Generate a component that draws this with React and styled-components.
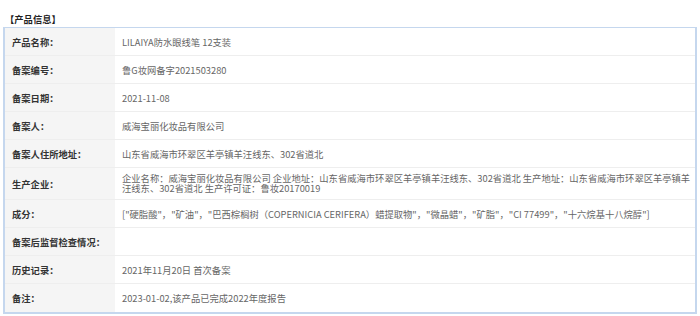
import React from "react";
import styled, { createGlobalStyle } from "styled-components";

const GlobalStyle = createGlobalStyle`
  *, *::before, *::after {
    box-sizing: border-box;
  }

  body {
    margin: 0;
    background: #fff;
    font-family: "Noto Sans CJK SC", "Noto Sans", sans-serif;
    font-size: 9.3px;
  }
`;

const rows = [
  { label: "产品名称：", value: "LILAIYA防水眼线笔 12支装" },
  { label: "备案编号：", value: "鲁G妆网备字2021503280" },
  { label: "备案日期：", value: "2021-11-08" },
  { label: "备案人：", value: "威海宝丽化妆品有限公司" },
  { label: "备案人住所地址：", value: "山东省威海市环翠区羊亭镇羊汪线东、302省道北" },
  {
    label: "生产企业：",
    value:
      "企业名称：威海宝丽化妆品有限公司 企业地址：山东省威海市环翠区羊亭镇羊汪线东、302省道北 生产地址：山东省威海市环翠区羊亭镇羊汪线东、302省道北 生产许可证：鲁妆20170019",
    tight: true,
  },
  {
    label: "成分：",
    value:
      '["硬脂酸"，"矿油"，"巴西棕榈树（COPERNICIA CERIFERA）蜡提取物"，"微晶蜡"，"矿脂"，"CI 77499"，"十六烷基十八烷醇"]',
  },
  { label: "备案后监督检查情况：", value: "" },
  { label: "历史记录：", value: "2021年11月20日 首次备案" },
  { label: "备注：", value: "2023-01-02,该产品已完成2022年度报告" },
];

function App() {
  return (
    <Page>
      <GlobalStyle />
      <Title>【产品信息】</Title>
      <Table>
        {rows.map((row, index) => (
          <Row key={index} $tight={row.tight}>
            <Label>{row.label}</Label>
            <Value $tight={row.tight}>{row.value}</Value>
          </Row>
        ))}
      </Table>
    </Page>
  );
}

const Page = styled.div`
  padding: 11px 3px 0 3px;
`;

const Title = styled.div`
  font-weight: bold;
  color: #222;
  line-height: 16px;
  padding-left: 2px;
`;

const Table = styled.div`
  border: 1px solid #c5d7ee;
  border-left-width: 2px;
  border-right-width: 2px;
  border-bottom-width: 2px;
`;

const Row = styled.div`
  display: flex;
  height: ${(p) => (p.$tight ? "32px" : "28px")};
  border-bottom: 1px solid #eeeeee;

  &:last-child {
    border-bottom: none;
  }
`;

const Label = styled.div`
  display: flex;
  align-items: center;
  width: 110px;
  flex-shrink: 0;
  padding-left: 7px;
  background: #f5f5f5;
  color: #333;
  font-weight: bold;
`;

const Value = styled.div`
  display: flex;
  align-items: center;
  flex: 1;
  padding: 0 2px 0 7px;
  color: #666;
  line-height: ${(p) => (p.$tight ? "9.5px" : "12px")};
`;

export default App;
